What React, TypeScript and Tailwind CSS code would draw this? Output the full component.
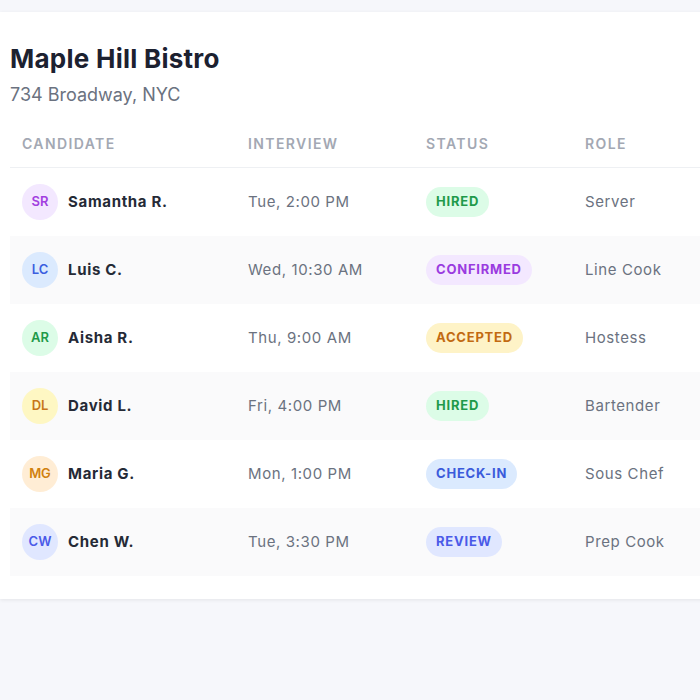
const rows = [
  { initials: "SR", name: "Samantha R.", time: "Tue, 2:00 PM", status: "HIRED", role: "Server", avatar: "bg-[#f3e8ff] text-[#a23fe0]", badge: "bg-[#dcfce7] text-[#1f9a4a]" },
  { initials: "LC", name: "Luis C.", time: "Wed, 10:30 AM", status: "CONFIRMED", role: "Line Cook", avatar: "bg-[#dbeafe] text-[#3b5fe0]", badge: "bg-[#f3e8ff] text-[#9a3be0]" },
  { initials: "AR", name: "Aisha R.", time: "Thu, 9:00 AM", status: "ACCEPTED", role: "Hostess", avatar: "bg-[#dcfce7] text-[#1f9a4a]", badge: "bg-[#fef3c7] text-[#c26a12]" },
  { initials: "DL", name: "David L.", time: "Fri, 4:00 PM", status: "HIRED", role: "Bartender", avatar: "bg-[#fef7c3] text-[#c7761a]", badge: "bg-[#dcfce7] text-[#1f9a4a]" },
  { initials: "MG", name: "Maria G.", time: "Mon, 1:00 PM", status: "CHECK-IN", role: "Sous Chef", avatar: "bg-[#ffedd5] text-[#d0800e]", badge: "bg-[#dbeafe] text-[#3b5bdb]" },
  { initials: "CW", name: "Chen W.", time: "Tue, 3:30 PM", status: "REVIEW", role: "Prep Cook", avatar: "bg-[#e0e7ff] text-[#4a5ae8]", badge: "bg-[#e0e7ff] text-[#4a5ae8]" },
];

const cols = "grid grid-cols-[226px_178px_159px_1fr] items-center";

export default function App() {
  return (
    <div className="min-h-screen w-full overflow-hidden bg-[#f6f7fb] pt-3 font-['Inter',sans-serif]">
      <div className="w-[780px] bg-white pl-[10px] pt-[31px] pb-[23px] shadow-[0_1px_4px_rgba(0,0,0,0.08)]">
        <h1 className="text-[26px] leading-8 font-bold tracking-[0.01em] text-[#1c2130]">Maple Hill Bistro</h1>
        <p className="mt-2 text-[18px] leading-6 text-[#6b7280]">734 Broadway, NYC</p>
        <div className={`${cols} mt-[13px] h-12 border-b border-[#eef0f3] text-[14px] font-semibold tracking-[0.1em] text-[#a3a8b3]`}>
          <div className="pl-3">CANDIDATE</div>
          <div className="pl-3">INTERVIEW</div>
          <div className="pl-3">STATUS</div>
          <div className="pl-3">ROLE</div>
        </div>
        {rows.map((r, i) => (
          <div key={r.name} className={`${cols} h-[68px] ${i % 2 === 1 ? "bg-[#fafafb]" : "bg-white"}`}>
            <div className="flex items-center gap-[10px] pl-3">
              <div className={`flex h-9 w-9 items-center justify-center rounded-full text-[13px] font-semibold ${r.avatar}`}>
                {r.initials}
              </div>
              <span className="text-[15px] font-bold tracking-[0.045em] text-[#252a36]">{r.name}</span>
            </div>
            <div className="pl-3 text-[15px] tracking-[0.04em] text-[#6b7280]">{r.time}</div>
            <div className="pl-3">
              <span className={`inline-flex h-[30px] items-center rounded-full px-[10px] text-[13px] font-bold tracking-[0.06em] ${r.badge}`}>
                {r.status}
              </span>
            </div>
            <div className="pl-3 text-[15px] tracking-[0.04em] text-[#6b7280]">{r.role}</div>
          </div>
        ))}
      </div>
    </div>
  );
}
